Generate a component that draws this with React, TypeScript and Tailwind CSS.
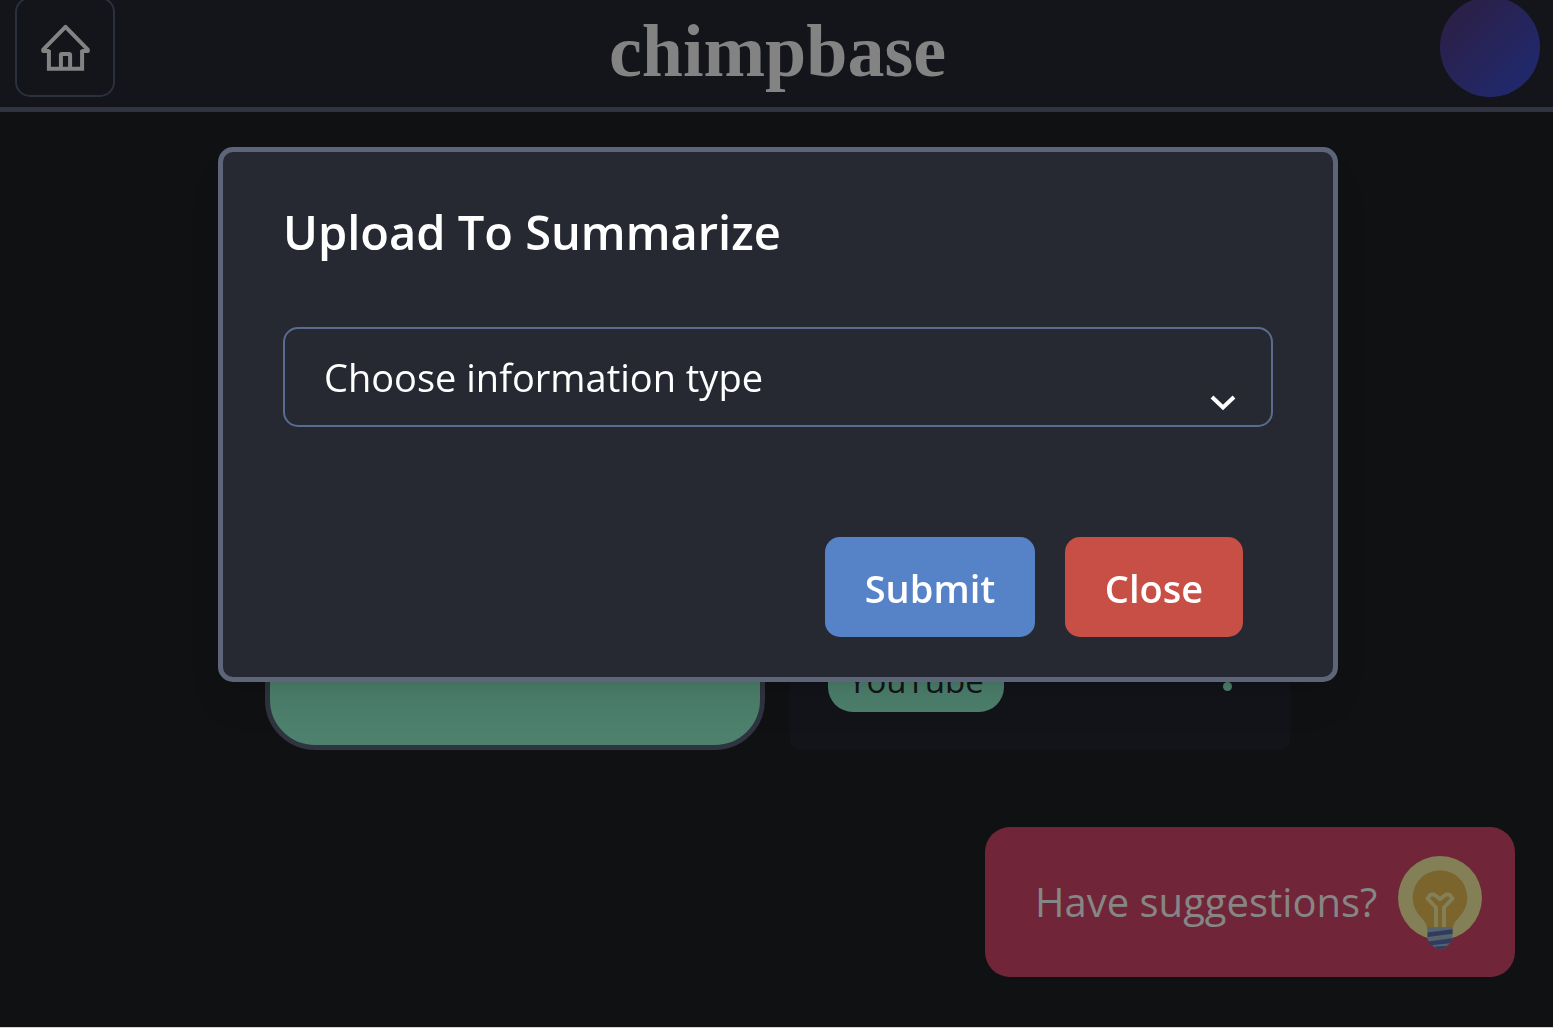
import React from "react";

function HomeIcon() {
  return (
    <svg viewBox="40 22 50 50" className="size-[50px]" fill="none" stroke="currentColor" strokeWidth="4" aria-hidden="true">
      <path d="M49.5 51H43.2V49.6L65.5 26.8L87.8 49.6V51H81.500" strokeLinejoin="round" />
      <path d="M48.9 50V68.700H82.1V50" />
      <path d="M60.9 68V55Q60.900 54 61.900 54H69.100Q70.100 54 70.100 55V68" />
    </svg>
  );
}

function BulbIcon() {
  return (
    <svg viewBox="0 0 100 100" className="size-[100px]" aria-hidden="true">
      <circle cx="50" cy="46" r="42" fill="#838058" />
      <path d="M50 18.500C34 18.500 22.800 31 22.800 46C22.800 55 27 61 31.500 66C35.500 70.500 37.200 73 37.200 77H62.800C62.800 73 64.500 70.500 68.500 66C73 61 77.200 55 77.200 46C77.200 31 66 18.500 50 18.500Z" fill="#7c652d" />
      <path d="M46 77V55.500L37.600 46.500Q39.500 42 44 42.500L50 47L56 42.500Q60.500 42 62.400 46.500L54 55.500V77" fill="none" stroke="#838058" strokeWidth="3.800" />
      <path d="M37.400 75H62.600V85Q62.600 89.500 58 93Q54 97.500 50 97.500Q46 97.500 42 93Q37.400 89.500 37.400 85Z" fill="#53646d" />
      <path d="M37.600 80.500L62.500 77.300V81.800L37.600 85ZM38 89.600L62.300 86.200Q62 89.500 60 91.300L41 93.300Q38.500 91.500 38 89.600ZM44 94.800L57 93.800Q54 97.500 50 97.500Q47 97.500 44 94.800Z" fill="#34395e" />
    </svg>
  );
}

function Header() {
  return (
    <header className="-mt-[3px] flex items-center justify-between border-b-[5px] border-[#2f3440] bg-[#14151b] pr-[13px] pb-2.5 pl-[15px]">
      <button type="button" aria-label="Home" className="flex size-[100px] items-center justify-center rounded-[15px] border-2 border-[#2a303c] text-[#838383]">
        <HomeIcon />
      </button>
      <h1 className="pt-2 font-['Liberation_Serif',serif] text-[74px] leading-[84px] font-bold text-[#838383]">chimpbase</h1>
      <button type="button" aria-label="Account" className="size-[100px] rounded-full bg-linear-to-br from-[#2a204a] from-20% to-[#20286a] to-80%" />
    </header>
  );
}

function Cards() {
  return (
    <main className="flex justify-center gap-[25px] pt-[250px] pl-0.5">
      <section className="h-[388px] w-[500px] rounded-[50px] border-[5px] border-[#2f3440] bg-[#4d816d]" />
      <section className="flex h-[388px] w-[500px] items-end justify-between rounded-[10px] bg-[#13141a] px-[38px] pb-[38px]">
        <span className="rounded-[25px] bg-[#4d816d] px-5 text-[33px] leading-[62px] text-[#14151b]">YouTube</span>
        <button type="button" aria-label="More options" className="mb-[21px] mr-[20px] flex flex-col gap-[9px]">
          <span className="size-[9px] rounded-full bg-[#4d816d]" />
          <span className="size-[9px] rounded-full bg-[#4d816d]" />
          <span className="size-[9px] rounded-full bg-[#4d816d]" />
        </button>
      </section>
    </main>
  );
}

function UploadDialog() {
  return (
    <div className="fixed inset-0 flex items-start justify-center pt-[147px] pl-[3px]">
      <form
        role="dialog"
        aria-labelledby="upload-title"
        onSubmit={(e) => e.preventDefault()}
        className="w-[1120px] rounded-[15px] border-[5px] border-[#5c6579] bg-[#272932] px-[60px] pt-[50px] pb-10 text-white shadow-[0_25px_38px_-8px_rgba(0,0,0,0.1),0_10px_15px_-10px_rgba(0,0,0,0.1)]"
      >
        <h2 id="upload-title" className="text-[47px] leading-[60px] font-semibold">Upload To Summarize</h2>
        <div className="relative mt-[65px]">
          <select
            aria-label="Information type"
            className="h-[100px] w-full appearance-none rounded-[15px] border-2 border-[#586c90] bg-transparent px-[39px] text-[38px]"
          >
            <option>Choose information type</option>
          </select>
          <svg viewBox="0 0 26 16" className="pointer-events-none absolute right-[37px] bottom-[16px] h-4 w-[26px]" fill="none" stroke="white" strokeWidth="4" aria-hidden="true">
            <path d="M2 2L13 12.400L24 2" />
          </svg>
        </div>
        <div className="mt-[110px] mr-[30px] flex justify-end gap-[30px] text-[38px] font-semibold">
          <button type="submit" className="h-[100px] w-[210px] rounded-[15px] bg-[#5683c8] pt-0.5">Submit</button>
          <button type="button" className="h-[100px] w-[178px] rounded-[15px] bg-[#c84f45] pt-0.5">Close</button>
        </div>
      </form>
    </div>
  );
}

export default function App() {
  return (
    <div className="flow-root min-h-screen border-b border-[#d4d4d4] bg-[#101112] font-['Open_Sans',sans-serif]">
      <Header />
      <Cards />
      <button
        type="button"
        className="fixed right-[38px] bottom-[51px] flex h-[150px] w-[530px] items-center justify-between rounded-[25px] bg-[#702638] pr-[25px] pl-[50px] text-[40px] text-[#868686]"
      >
        <span>Have suggestions?</span>
        <BulbIcon />
      </button>
      <UploadDialog />
    </div>
  );
}
